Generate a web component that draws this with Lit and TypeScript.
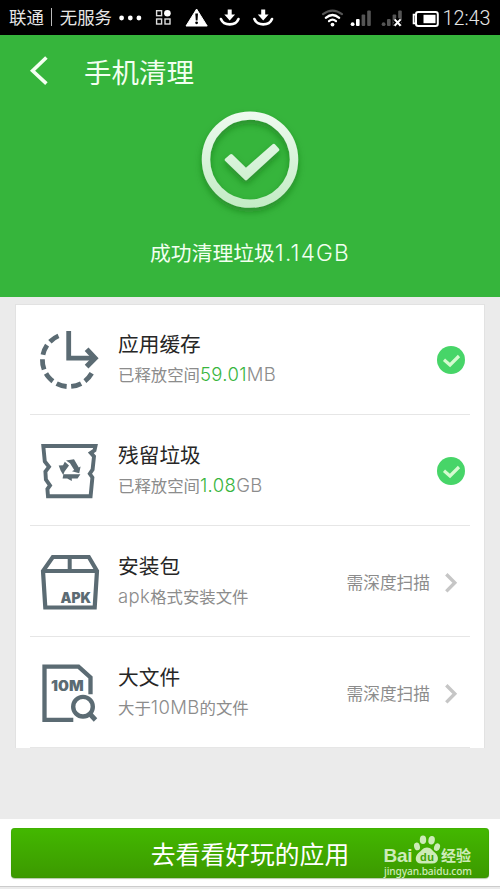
import { LitElement, html, svg, css, nothing } from "lit";
import { customElement, property } from "lit/decorators.js";

const INK = "#5b6b73";

const icons: Record<string, unknown> = {
  cache: svg`
    <path d="M53.7 45.3A26.4 26.4 0 1 1 20.9 7.7" stroke-width="4.8" stroke-dasharray="10.4 4.5"/>
    <path d="M30.7 3V30.2H57" stroke-width="4.8"/>
    <path d="M48.6 21.2L57 30.2L48.6 38.6" stroke-width="5.2"/>`,
  residue: svg`
    <path d="M5.3 7H57.5L56.5 11.4L52.8 13.8L56 17.5L54.6 30.5L51.8 34.8L54.4 38.5L52.6 57.3H10L9.4 50L12 46.4L7.9 40.6L7.4 32.6L11 27.8L6.8 22.4Z" stroke-width="3.9"/>
    <g fill="${INK}" stroke="none">
      <path d="M28 21.5L36 20.3L40.8 28.6L42.6 27.6L41.2 34.2L34 32.2L36.2 31L32 24.2Z"/>
      <path d="M26.8 22.8L31 26.4L26.6 32.6L25.2 36L22.6 31.4L20.7 26.6L25 26.2Z"/>
      <path d="M25.4 35.2L42.4 35.2L39.6 39.6H33.8V42L29.2 39.4L24.6 39.4Z"/>
    </g>`,
  pack: svg`
    <path d="M7.3 57.5L5 21L14.8 7H50.8L59 21L56.7 57.5Z" stroke-width="4.2"/>
    <path d="M5 21H59M31.7 7V21" stroke-width="4"/>
    <text class="mark" x="22.4" y="53.2" textLength="30.6" lengthAdjust="spacingAndGlyphs">APK</text>`,
  file: svg`
    <path d="M35.3 58.8H6.5V5.6H40.5L52.5 16.5V33.3" stroke-width="4.3"/>
    <circle cx="45" cy="45.7" r="9.8" stroke-width="4.4"/>
    <path d="M51.5 52.5L57.5 59" stroke-width="4.8"/>
    <text class="mark" x="13" y="29.6" textLength="32.6" lengthAdjust="spacingAndGlyphs">10M</text>`,
};

@customElement("status-bar")
class StatusBar extends LitElement {
  static styles = css`
    :host { display: flex; align-items: center; height: 35px; background: #000; color: #e6e6e6;
      padding: 0 0 0 9px; box-sizing: border-box; white-space: nowrap; }
    .net { font: 17.4px/34px "Noto Sans CJK SC", sans-serif; display: flex; align-items: center; margin-top: -2px; }
    .bar { width: 1px; height: 18px; background: #bbb; margin: 0 8px 0 7px; }
    .time { font: 300 19.8px/35px Roboto, sans-serif; margin-left: 2.5px; padding-top: 2px; }
    svg { display: block; flex: none; }
  `;
  signal(off: boolean) {
    return svg`
      <circle cx="2.6" cy="24.2" r="1.9" fill="${off ? "#555" : "#fff"}"/>
      <rect x="6" y="19" width="3.6" height="7" rx="1" fill="${off ? "#555" : "#fff"}"/>
      <rect x="11.6" y="14.5" width="3.6" height="11.5" rx="1" fill="#555"/>
      <rect x="17.2" y="10.4" width="3.6" height="15.6" rx="1" fill="#555"/>
      ${off ? svg`<path d="M13.6 19.4L19.6 25.8M19.6 19.4L13.6 25.8" stroke="#000" stroke-width="5"/><path d="M13.6 19.4L19.6 25.8M19.6 19.4L13.6 25.8" stroke="#fff" stroke-width="2"/>` : nothing}`;
  }
  download() {
    return svg`<path d="M1.4 19C4.4 26.2 16.1 26.2 19 19" fill="none" stroke="#fff" stroke-width="2.6" stroke-linecap="round"/>
      <path d="M8.2 9.4H12.2V14.6H15.6L10.2 20.4L4.8 14.6H8.2Z" fill="#fff"/>`;
  }
  render() {
    return html`
      <div class="net"><span>联通</span><span class="bar"></span><span>无服务</span></div>
      <svg width="209" height="35" viewBox="112 0 209 35">
        <g fill="#fff"><circle cx="121.6" cy="18" r="2.4"/><circle cx="130.3" cy="18" r="2.4"/><circle cx="138.9" cy="18" r="2.4"/></g>
        <g fill="none" stroke="#ddd" stroke-width="1.4">
          <rect x="156.6" y="10.7" width="5" height="5"/><rect x="156.6" y="19" width="5" height="5"/><rect x="165" y="19" width="5" height="5"/>
        </g>
        <circle cx="167.4" cy="13.3" r="3.3" fill="#fff"/>
        <path d="M196.6 9L207.2 26H186Z" fill="#fff" stroke="#fff" stroke-width="1" stroke-linejoin="round"/>
        <path d="M195.3 13.5H198L197.5 20.4H195.8Z" fill="#000"/><circle cx="196.6" cy="22.8" r="1.4" fill="#000"/>
        <g transform="translate(219.5)">${this.download()}</g>
        <g transform="translate(253)">${this.download()}</g>
      </svg>
      <svg width="119" height="35" viewBox="321 0 119 35">
        <g fill="none" stroke-width="2.2" stroke-linecap="round">
          <path d="M323 14.2Q332.5 7 342 14.2" stroke="#555"/>
          <path d="M325.8 17.8Q332.5 12.2 339.2 17.8M329 21.2Q332.5 18.2 336 21.2" stroke="#fff"/>
        </g>
        <circle cx="332.5" cy="24.6" r="1.9" fill="#fff"/>
        <g transform="translate(350)">${this.signal(false)}</g>
        <g transform="translate(381)">${this.signal(true)}</g>
        <rect x="416" y="12" width="21.8" height="14" rx="2.2" fill="none" stroke="#fff" stroke-width="2"/>
        <path d="M415.4 14.6H413.6V23.4H415.4" fill="none" stroke="#fff" stroke-width="1.8"/>
        <rect x="423.5" y="14.8" width="12" height="8.4" fill="#fff"/>
      </svg>
      <span class="time">12:43</span>`;
  }
}

@customElement("clean-row")
class CleanRow extends LitElement {
  @property() icon = "";
  @property() name = "";
  @property({ attribute: false }) detail: unknown;
  @property({ type: Boolean }) done = false;
  static styles = css`
    :host { display: flex; align-items: flex-start; height: 111px; box-sizing: border-box;
      margin: 0 14px; padding: 0 5px 0 8px; border-bottom: 1.5px solid #e6e6e6; white-space: nowrap; }
    svg { display: block; flex: none; }
    .icon { margin-top: 24px; width: 64px; height: 64px; fill: none; stroke: #5b6b73; }
    .mark { font: 900 14px Inter, sans-serif; fill: #5b6b73; stroke: none; }
    .text { flex: 1; padding: 26px 0 0 16px; }
    .name { font: 20.7px/26px "Noto Sans CJK SC", sans-serif; color: #262626; }
    .detail { margin-top: 7px; font: 16.4px/22px "Noto Sans CJK SC", sans-serif; color: #8c8c8c; }
    .detail .l { font: 300 18.5px/20px Inter, sans-serif; letter-spacing: .35px; }
    .detail .hl { color: #38b53e; }
    .need { font: 16.7px/24px "Noto Sans CJK SC", sans-serif; color: #8c8c8c; margin: 44px 7px 0 0; }
    .end { margin-top: 42px; }
  `;
  render() {
    return html`
      <svg class="icon" viewBox="0 0 64 64">${icons[this.icon]}</svg>
      <div class="text"><div class="name">${this.name}</div><div class="detail">${this.detail}</div></div>
      ${this.done ? nothing : html`<span class="need">需深度扫描</span>`}
      <svg class="end" width="28" height="28" viewBox="0 0 28 28">
        ${this.done
          ? svg`<circle cx="14" cy="14" r="14" fill="#47d568"/><path d="M7 13.8L13 19L22 10" fill="none" stroke="#d6fbd0" stroke-width="3.2"/>`
          : svg`<path d="M9.3 6.2L17.8 14.8L9.3 23.4" fill="none" stroke="#c6c6c6" stroke-width="3.4"/>`}
      </svg>`;
  }
}

@customElement("app-root")
class AppRoot extends LitElement {
  static styles = css`
    :host { display: flex; flex-direction: column; height: 889px; background: #ebebeb; overflow: hidden;
      font-family: "Noto Sans CJK SC", sans-serif; }
    svg { display: block; }
    .hero { height: 262px; background: #36b53c; color: #f2fff0; display: flex; flex-direction: column; align-items: center; }
    .top { align-self: stretch; display: flex; align-items: center; height: 72px; padding-left: 28px; }
    .title { font-size: 27.5px; line-height: 40px; margin-left: 32px; padding-bottom: 1px; }
    .tick { margin-top: -3px; }
    .sum { font-size: 20.8px; line-height: 30px; margin-top: 13px; white-space: nowrap; }
    .sum .l { font: 300 22.6px/28px Inter, sans-serif; letter-spacing: 1.2px; }
    .card { margin: 7px 15px 0; border: 1px solid #e2e2e2; border-bottom: 0; background: #fff; height: 444px; box-sizing: border-box; }
    .list { margin-top: -1px; }
    .foot { margin-top: 71px; height: 68px; box-sizing: border-box; background: #fff; padding: 9px 11px; border-bottom: 1px solid #ccc; }
    .btn { position: relative; height: 50px; border-radius: 4px; background: linear-gradient(#43b800, #3c9900);
      box-shadow: inset 0 0 1px #2f7a10, 0 1px 1px #b5c9a8; color: #fff; font-size: 24.8px; line-height: 50px; text-align: center; }
    .logo { position: absolute; left: 369px; top: 4px; }
  `;
  render() {
    const l = (t: string, hl = false) => html`<span class="l ${hl ? "hl" : ""}">${t}</span>`;
    return html`
      <status-bar></status-bar>
      <div class="hero">
        <div class="top">
          <svg width="24" height="32" viewBox="28 55 24 32"><path d="M46.4 57.5L32.6 70.7L46.4 83.6" fill="none" stroke="#f4fff2" stroke-width="3.6"/></svg>
          <span class="title">手机清理</span>
        </div>
        <svg class="tick" width="120" height="120" viewBox="190 104 120 120">
          <defs>
            <linearGradient id="g" gradientUnits="userSpaceOnUse" x1="0" y1="111" x2="0" y2="208"><stop offset="0" stop-color="#effaf0"/><stop offset="1" stop-color="#c2ecc4"/></linearGradient>
            <filter id="s" x="-30%" y="-30%" width="160%" height="160%"><feDropShadow dx="0" dy="4" stdDeviation="3.5" flood-color="#0b6410" flood-opacity=".5"/></filter>
          </defs>
          <g fill="none" stroke="url(#g)" filter="url(#s)">
            <circle cx="250" cy="159.6" r="44" stroke-width="8.4"/>
            <path d="M226.6 159.8L231.2 155.8L246 170.2L273.8 145.6L277.4 149.6L246 178.4Z" fill="url(#g)" stroke-width="3.6" stroke-linejoin="round"/>
          </g>
        </svg>
        <div class="sum">成功清理垃圾${l("1.14GB")}</div>
      </div>
      <div class="card"><div class="list">
        <clean-row icon="cache" name="应用缓存" done .detail=${html`已释放空间${l("59.01", true)}${l("MB")}`}></clean-row>
        <clean-row icon="residue" name="残留垃圾" done .detail=${html`已释放空间${l("1.08", true)}${l("GB")}`}></clean-row>
        <clean-row icon="pack" name="安装包" .detail=${html`${l("apk")}格式安装文件`}></clean-row>
        <clean-row icon="file" name="大文件" .detail=${html`大于${l("10MB")}的文件`}></clean-row>
      </div></div>
      <div class="foot"><div class="btn">去看看好玩的应用
        <svg class="logo" width="96" height="46" viewBox="380 832 96 46" fill="#cdebb8">
          <text x="383.5" y="862.4" font-family="Liberation Sans, sans-serif" font-weight="700" font-size="19" textLength="29">Bai</text>
          <g>
            <ellipse cx="417" cy="846.4" rx="2.9" ry="3.9" transform="rotate(-15 417 846.4)"/>
            <ellipse cx="423" cy="839.8" rx="3.2" ry="4.3"/>
            <ellipse cx="431.6" cy="840.2" rx="3.2" ry="4.3" transform="rotate(10 431.6 840.2)"/>
            <ellipse cx="437" cy="847.2" rx="2.9" ry="3.9" transform="rotate(20 437 847.2)"/>
            <path d="M427 847.4C431 847.4 432.2 850.4 434.8 852.4C439.4 856 439.4 863.4 432.4 863.4H421.2C414.4 863.4 414.4 856 419 852.4C421.8 850.4 423 847.4 427 847.4Z"/>
          </g>
          <text x="420" y="861.3" font-family="Liberation Sans, sans-serif" font-weight="700" font-size="11" fill="#3fa305" textLength="14">du</text>
          <text x="441" y="861.4" font-family="Noto Sans CJK SC, sans-serif" font-weight="700" font-size="15">经验</text>
          <text x="384" y="874.8" font-family="Noto Sans, sans-serif" font-size="10.2" font-weight="500" textLength="88">jingyan.baidu.com</text>
        </svg>
      </div></div>`;
  }
}
